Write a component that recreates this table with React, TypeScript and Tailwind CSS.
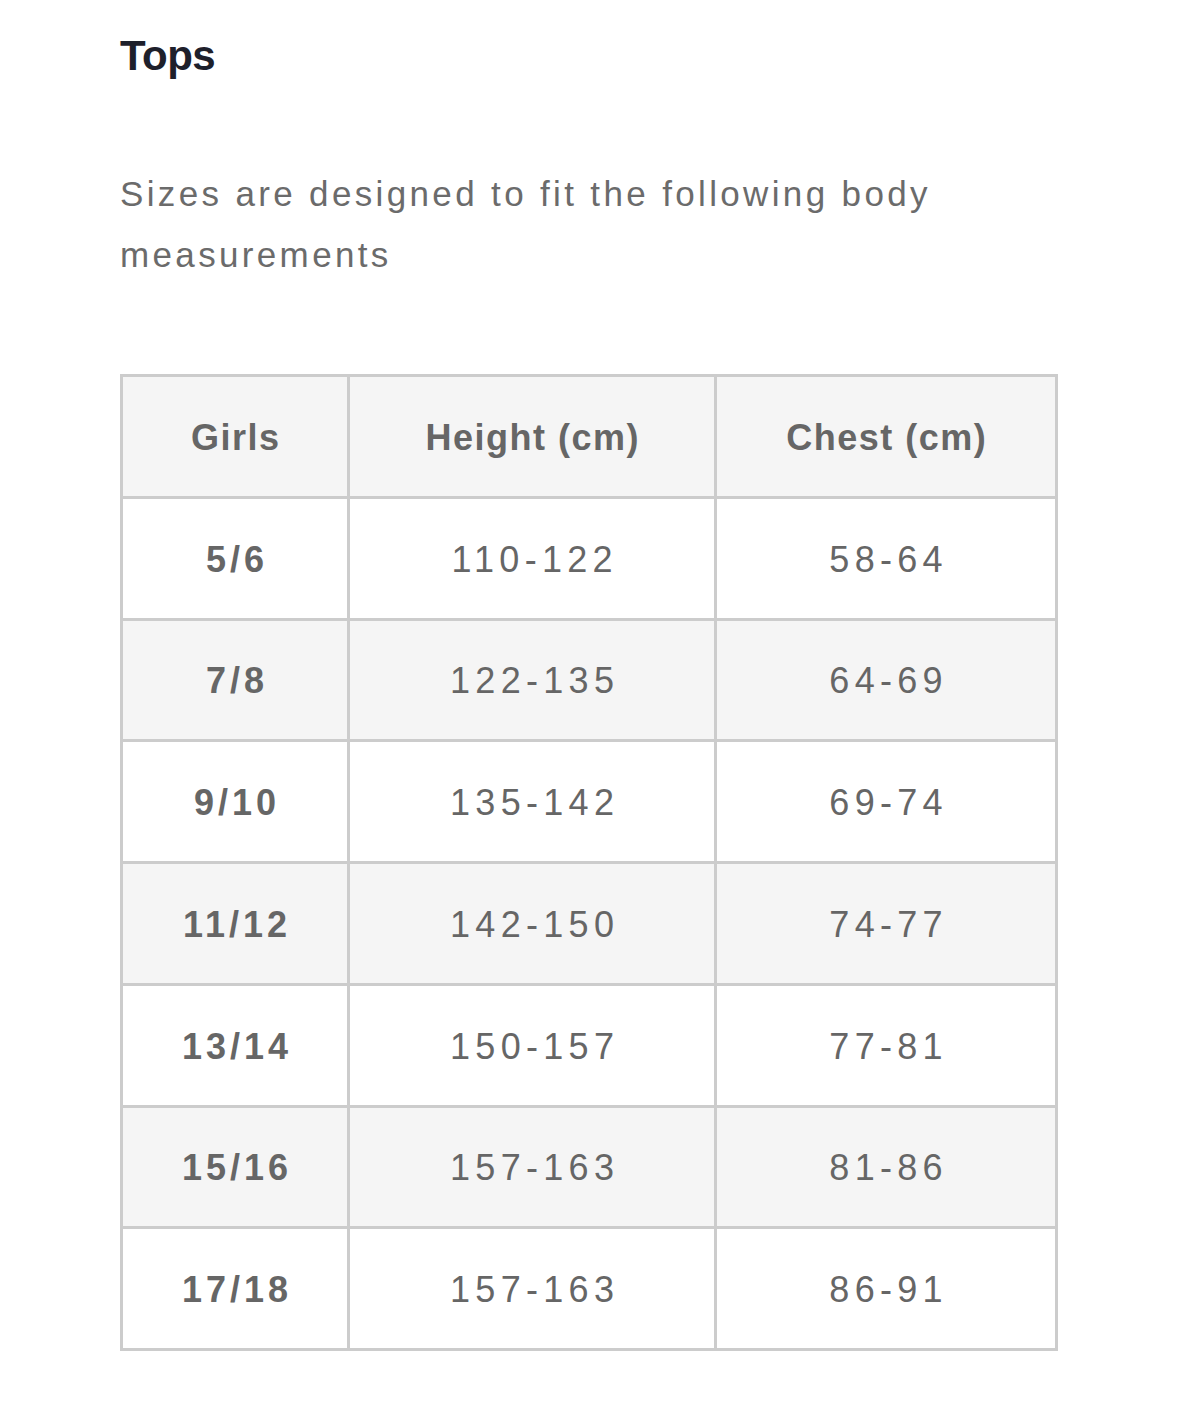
import React from 'react';

const rows = [
  { size: '5/6', height: '110-122', chest: '58-64' },
  { size: '7/8', height: '122-135', chest: '64-69' },
  { size: '9/10', height: '135-142', chest: '69-74' },
  { size: '11/12', height: '142-150', chest: '74-77' },
  { size: '13/14', height: '150-157', chest: '77-81' },
  { size: '15/16', height: '157-163', chest: '81-86' },
  { size: '17/18', height: '157-163', chest: '86-91' },
];

// trailing letter-spacing pushes centred text left, so each cell pads left by its tracking
const cell = 'h-[118.75px] pt-[3px] flex items-center justify-center text-[36px] leading-none text-[#666666]';

export default function App() {
  return (
    <div className="min-h-[1403px] bg-white pl-[120px] pt-[35px] font-['Liberation_Sans',Arial,sans-serif]">
      <h1 className="text-[42px] leading-none font-bold text-[#1e202b] tracking-[-0.5px]">Tops</h1>

      <p className="mt-[86px] w-[938px] text-[35px] leading-[61px] tracking-[3.35px] text-[#6b6b6b]">
        Sizes are designed to fit the following body measurements
      </p>

      <div className="mt-[89px] w-[938px] grid grid-cols-[224px_364px_338px] gap-[3px] p-[3px] bg-[#cccccc]">
        <div className={`${cell} bg-[#f5f5f5] font-bold tracking-[1.5px] pl-[1.5px]`}>Girls</div>
        <div className={`${cell} bg-[#f5f5f5] font-bold tracking-[1.5px] pl-[1.5px]`}>Height (cm)</div>
        <div className={`${cell} bg-[#f5f5f5] font-bold tracking-[1.5px] pl-[1.5px]`}>Chest (cm)</div>

        {rows.map((r, i) => {
          const bg = i % 2 === 0 ? 'bg-white' : 'bg-[#f5f5f5]';
          return (
            <React.Fragment key={r.size + i}>
              <div className={`${cell} ${bg} font-bold tracking-[4px] pl-[4px]`}>{r.size}</div>
              <div className={`${cell} ${bg} tracking-[5.3px] pl-[5.3px]`}>{r.height}</div>
              <div className={`${cell} ${bg} tracking-[5.3px] pl-[5.3px]`}>{r.chest}</div>
            </React.Fragment>
          );
        })}
      </div>
    </div>
  );
}
